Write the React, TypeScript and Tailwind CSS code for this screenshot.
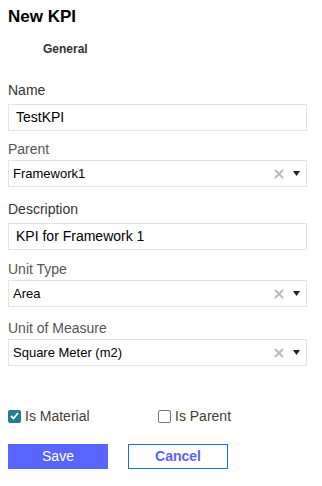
import React from 'react';

const font = { fontFamily: '"Liberation Sans", Arial, sans-serif' };

const TextField: React.FC<{ label: string; value: string; className?: string }> = ({ label, value, className }) => (
  <div className={className}>
    <div className="text-[14px] leading-[16px] text-[#333] mb-[6px]">{label}</div>
    <div className="h-[27px] border border-[#e3e3e3] flex items-center pl-[7px] text-[14px] text-black">{value}</div>
  </div>
);

const SelectField: React.FC<{ label: string; value: string; className?: string }> = ({ label, value, className }) => (
  <div className={className}>
    <div className="text-[14px] leading-[16px] text-[#555] mb-[3px]">{label}</div>
    <div className="h-[27px] border border-[#e3e3e3] flex items-center pl-[4px] pr-[6px] text-[13px] text-black">
      <span className="flex-1">{value}</span>
      <svg width="10" height="10" viewBox="0 0 10 10" className="mr-[9px]">
        <path d="M1 1L9 9M9 1L1 9" stroke="#bbb" strokeWidth="2" />
      </svg>
      <svg width="7" height="5" viewBox="0 0 7 5">
        <path d="M0 0H7L3.5 5Z" fill="#222" />
      </svg>
    </div>
  </div>
);

export default function App() {
  return (
    <div className="w-[322px] h-[486px] bg-white px-[8px] pt-[6px]" style={font}>
      <h1 className="text-[17px] leading-[22px] font-bold text-black">New KPI</h1>
      <div className="pl-[35px] mt-[12px] text-[12px] font-bold text-[#333]">General</div>

      <div className="w-[299px] mt-[24px] flex flex-col">
        <TextField label="Name" value="TestKPI" />
        <SelectField label="Parent" value="Framework1" className="mt-[10px]" />
        <TextField label="Description" value="KPI for Framework 1" className="mt-[14px]" />
        <SelectField label="Unit Type" value="Area" className="mt-[11px]" />
        <SelectField label="Unit of Measure" value="Square Meter (m2)" className="mt-[13px]" />
      </div>

      <div className="mt-[40px] flex items-center text-[14px] leading-[20px] text-[#4a3c33]">
        <label className="flex items-center w-[150px]">
          <span className="w-[13px] h-[13px] rounded-[2px] bg-[#237d8c] flex items-center justify-center mr-[4px]">
            <svg width="9" height="8" viewBox="0 0 9 8">
              <path d="M1 4L3.5 6.5L8 1" stroke="white" strokeWidth="1.8" fill="none" />
            </svg>
          </span>
          Is Material
        </label>
        <label className="flex items-center">
          <span className="w-[13px] h-[13px] rounded-[2px] border border-[#767676] bg-white mr-[4px]" />
          Is Parent
        </label>
      </div>

      <div className="mt-[18px] flex gap-[20px]">
        <button className="w-[100px] h-[25px] bg-[#5865ff] text-white text-[14px]">Save</button>
        <button className="w-[100px] h-[25px] border border-[#1a6ee6] bg-white text-[#5865ff] text-[14px] font-bold">Cancel</button>
      </div>
    </div>
  );
}
